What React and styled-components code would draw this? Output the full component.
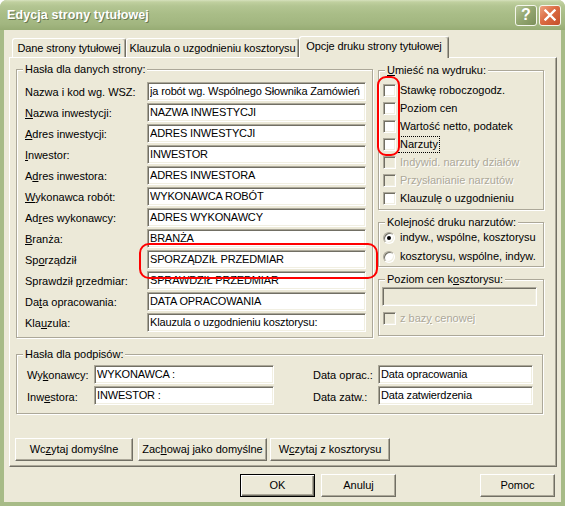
import React from 'react';
import styled, { createGlobalStyle, css } from 'styled-components';

const Global = createGlobalStyle`
  html, body { margin: 0; padding: 0; background: #ffffff; }
  body { font-family: "Liberation Sans", Arial, sans-serif; font-size: 11px; color: #000; }
  * { box-sizing: border-box; }
`;

const FACE = '#ECE9D8';
const SHADOW = '#ACA899';
const DARK = '#716F64';
const LIGHT = '#F1EFE2';

const sunken = css`
  border: 1px solid;
  border-color: ${SHADOW} #fff #fff ${SHADOW};
  box-shadow: inset 1px 1px 0 ${DARK}, inset -1px -1px 0 ${LIGHT};
`;

const Window = styled.div`
  position: relative;
  width: 565px;
  height: 506px;
  display: flex;
  flex-direction: column;
  background: #A7BB87;
  border-radius: 7px 7px 0 0;
  overflow: hidden;
`;

const TitleBar = styled.div`
  flex: none;
  height: 30px;
  display: flex;
  align-items: center;
  padding: 0 4px 0 7px;
  background: linear-gradient(to bottom, #D6E1BD 0px, #C0D09F 2px, #B3C592 6px, #A9BD87 14px, #A2B680 24px, #97AC74 30px);
`;

const Title = styled.div`
  flex: 1;
  color: #fff;
  font-family: "Liberation Sans", Arial, sans-serif;
  font-weight: bold;
  font-size: 12.5px;
  letter-spacing: 0.1px;
  text-shadow: 1px 1px 0 #6B7B52;
  padding-bottom: 1px;
`;

const CaptionButton = styled.div`
  width: 22px;
  height: 21px;
  margin-left: 2px;
  border: 1px solid #F4F6EC;
  border-radius: 3px;
  display: flex;
  align-items: center;
  justify-content: center;
  color: #fff;
  font-weight: bold;
  font-size: 16px;
  font-family: "Liberation Sans", Arial, sans-serif;
  background: ${(p) =>
    p.$close
      ? 'linear-gradient(135deg, #EEA27F 0%, #DB6B43 45%, #C5502A 100%)'
      : 'linear-gradient(135deg, #B9C79A 0%, #94A771 45%, #7C8F5A 100%)'};
`;

const Frame = styled.div`
  flex: 1;
  display: flex;
  flex-direction: column;
  background: ${FACE};
  margin: 0 4px 4px 4px;
  padding: 6px 2px 0 5px;
`;

const TabStrip = styled.div`
  display: flex;
  align-items: flex-end;
  height: 21px;
  padding-left: 3px;
  position: relative;
  z-index: 1;
`;

const Tab = styled.div`
  width: ${(p) => p.$w}px;
  height: ${(p) => (p.$active ? 22 : 19)}px;
  margin-bottom: ${(p) => (p.$active ? -1 : 0)}px;
  background: ${FACE};
  border-top: 1px solid #fff;
  border-left: 1px solid #fff;
  border-right: 1px solid ${DARK};
  border-radius: 3px 3px 0 0;
  box-shadow: inset -1px 0 0 ${SHADOW};
  display: flex;
  align-items: center;
  justify-content: center;
  padding-bottom: ${(p) => (p.$active ? 3 : 1)}px;
  white-space: nowrap;
  letter-spacing: -0.1px;
`;

const Panel = styled.div`
  width: 548px;
  height: 410px;
  border: 1px solid;
  border-color: #fff ${DARK} ${DARK} #fff;
  box-shadow: inset -1px -1px 0 ${SHADOW};
  padding: 11px 11px 0 6px;
  display: flex;
  flex-direction: column;
`;

const TopSection = styled.div`
  display: flex;
  gap: 5px;
`;

const Group = styled.div`
  position: relative;
  width: ${(p) => p.$w}px;
  height: ${(p) => p.$h}px;
  border: 1px solid ${SHADOW};
  box-shadow: inset 1px 1px 0 #fff, 1px 1px 0 #fff;
  padding: ${(p) => p.$pad};
  margin-top: ${(p) => p.$mt || 0}px;
  flex: none;
`;

const Legend = styled.span`
  position: absolute;
  top: -7px;
  left: 6px;
  padding: 0 2px;
  line-height: 13px;
  background: ${FACE};
  white-space: nowrap;
`;

const FieldGrid = styled.div`
  display: grid;
  grid-template-columns: ${(p) => p.$cols};
  grid-auto-rows: 19px;
  row-gap: 2px;
  align-items: center;
`;

const Label = styled.div`
  white-space: nowrap;
  padding-top: ${(p) => p.$dy || 0}px;
`;

const Key = styled.span`
  text-decoration: underline;
  text-underline-offset: 1px;
`;

const Field = styled.input`
  ${sunken};
  width: 100%;
  height: 19px;
  margin: 0;
  padding: 0 1px 1px 2px;
  font: inherit;
  letter-spacing: -0.15px;
  color: #000;
  background: ${(p) => (p.disabled ? FACE : '#fff')};
  outline: none;
  overflow: hidden;
  text-overflow: clip;
`;

const RightColumn = styled.div`
  display: flex;
  flex-direction: column;
  padding-top: 1px;
  gap: 12px;
`;

const CheckList = styled.div`
  display: flex;
  flex-direction: column;
  gap: 5px;
  margin-top: ${(p) => p.$mt || 0}px;
  padding-left: ${(p) => p.$pl || 0}px;
`;

const CheckRow = styled.div`
  display: flex;
  align-items: center;
  height: 13px;
  gap: 2px;
  white-space: nowrap;
  color: ${(p) => (p.$disabled ? SHADOW : '#000')};
  text-shadow: ${(p) => (p.$disabled ? '1px 1px 0 #fff' : 'none')};
`;

const Box = styled.span`
  ${sunken};
  width: 13px;
  height: 13px;
  flex: none;
  background: ${(p) => (p.$disabled ? FACE : '#fff')};
`;

const RadioDot = styled.span`
  ${sunken};
  width: 12px;
  height: 12px;
  flex: none;
  border-radius: 50%;
  background: #fff;
  display: flex;
  align-items: center;
  justify-content: center;
  margin-right: 1px;
  &::after {
    content: '';
    width: 4px;
    height: 4px;
    border-radius: 50%;
    background: ${(p) => (p.$checked ? '#000' : 'transparent')};
  }
`;

const CheckText = styled.span`
  border: 1px ${(p) => (p.$focus ? 'dotted #000' : 'solid transparent')};
  padding: 1px 1px;
  line-height: 13px;
`;

const RadioList = styled.div`
  display: flex;
  flex-direction: column;
  gap: 6px;
`;

const SignRow = styled.div`
  display: flex;
  justify-content: space-between;
`;

const ButtonRow = styled.div`
  display: flex;
  gap: 5px;
  margin: 24px 0 0 -1px;
`;

const Button = styled.div`
  width: ${(p) => p.$w}px;
  height: 23px;
  flex: none;
  display: flex;
  align-items: center;
  justify-content: center;
  background: ${FACE};
  white-space: nowrap;
  border: 1px solid;
  border-color: ${(p) => (p.$default ? '#000' : `#fff ${DARK} ${DARK} #fff`)};
  box-shadow: ${(p) =>
    p.$default
      ? `inset 1px 1px 0 #fff, inset -1px -1px 0 ${DARK}, inset -2px -2px 0 ${SHADOW}`
      : `inset -1px -1px 0 ${SHADOW}`};
  padding-bottom: 1px;
  margin-left: ${(p) => p.$ml || 0}px;
`;

const BottomBar = styled.div`
  display: flex;
  margin-top: 7px;
  padding-left: 231px;
  gap: 6px;
`;

const Highlight = styled.div`
  position: absolute;
  left: ${(p) => p.$x}px;
  top: ${(p) => p.$y}px;
  width: ${(p) => p.$w}px;
  height: ${(p) => p.$h}px;
  border: 2px solid #FF0000;
  border-radius: ${(p) => p.$r}px;
  pointer-events: none;
`;

function Acc({ text }) {
  const i = text.indexOf('&');
  if (i < 0) return text;
  return (
    <>
      {text.slice(0, i)}
      <Key>{text[i + 1]}</Key>
      {text.slice(i + 2)}
    </>
  );
}

const fields = [
  ['Nazwa i kod wg. WSZ:', 'ja robót wg. Wspólnego Słownika Zamówień'],
  ['&Nazwa inwestycji:', 'NAZWA INWESTYCJI'],
  ['&Adres inwestycji:', 'ADRES INWESTYCJI'],
  ['&Inwestor:', 'INWESTOR'],
  ['A&dres inwestora:', 'ADRES INWESTORA'],
  ['&Wykonawca robót:', 'WYKONAWCA ROBÓT'],
  ['Ad&res wykonawcy:', 'ADRES WYKONAWCY'],
  ['&Branża:', 'BRANŻA'],
  ['Sp&orządził', 'SPORZĄDZIŁ PRZEDMIAR'],
  ['Sprawdził &przedmiar:', 'SPRAWDZIŁ PRZEDMIAR'],
  ['Da&ta opracowania:', 'DATA OPRACOWANIA'],
  ['Kla&uzula:', 'Klauzula o uzgodnieniu kosztorysu:'],
];

const checks = [
  { t: 'Stawkę roboczogodz.' },
  { t: 'Poziom cen' },
  { t: 'Wartość netto, podatek' },
  { t: 'Narzuty', focus: true },
  { t: 'Indywid. narzuty działów', disabled: true },
  { t: 'Przysłanianie narzutów', disabled: true },
  { t: 'Klauzulę o uzgodnieniu' },
];

function Check({ t, focus, disabled }) {
  return (
    <CheckRow $disabled={disabled}>
      <Box $disabled={disabled} />
      <CheckText $focus={focus}>
        <Acc text={t} />
      </CheckText>
    </CheckRow>
  );
}

function Radio({ t, checked }) {
  return (
    <CheckRow>
      <RadioDot $checked={checked} />
      <CheckText>{t}</CheckText>
    </CheckRow>
  );
}

export default function App() {
  return (
    <>
      <Global />
      <Window>
        <TitleBar>
          <Title>Edycja strony tytułowej</Title>
          <CaptionButton>?</CaptionButton>
          <CaptionButton $close>
            <svg width="12" height="12" viewBox="0 0 12 12">
              <path d="M1.5 1.5 L10.5 10.5 M10.5 1.5 L1.5 10.5" stroke="#fff" strokeWidth="2.4" strokeLinecap="square" />
            </svg>
          </CaptionButton>
        </TitleBar>
        <Frame>
          <TabStrip>
            <Tab $w={114}>Dane strony tytułowej</Tab>
            <Tab $w={173}>Klauzula o uzgodnieniu kosztorysu</Tab>
            <Tab $w={150} $active>Opcje druku strony tytułowej</Tab>
          </TabStrip>
          <Panel>
            <TopSection>
              <Group $w={357} $h={269} $pad="12px 6px 0 8px">
                <Legend>Hasła dla danych strony:</Legend>
                <FieldGrid $cols="122px 219px">
                  {fields.map(([l, v]) => (
                    <React.Fragment key={l}>
                      <Label><Acc text={l} /></Label>
                      <Field readOnly value={v} />
                    </React.Fragment>
                  ))}
                </FieldGrid>
              </Group>
              <RightColumn>
                <Group $w={166} $h={140} $pad="13px 4px 0 4px">
                  <Legend><Acc text="&Umieść na wydruku:" /></Legend>
                  <CheckList>
                    {checks.map((c) => (
                      <Check key={c.t} {...c} />
                    ))}
                  </CheckList>
                </Group>
                <Group $w={166} $h={45} $pad="8px 4px 0 4px">
                  <Legend>Kolejność druku narzutów:</Legend>
                  <RadioList>
                    <Radio t="indyw., wspólne, kosztorysu" checked />
                    <Radio t="kosztorysu, wspólne, indyw." />
                  </RadioList>
                </Group>
                <Group $w={166} $h={57} $pad="7px 6px 0 3px">
                  <Legend><Acc text="Poziom cen k&osztorysu:" /></Legend>
                  <Field disabled readOnly value="" />
                  <CheckList $mt={6} $pl={1}>
                    <Check t="z baz&y cenowej" disabled />
                  </CheckList>
                </Group>
              </RightColumn>
            </TopSection>
            <Group $w={527} $h={60} $pad="10px 9px 0 10px" $mt={16}>
              <Legend>Hasła dla podpisów:</Legend>
              <SignRow>
                <FieldGrid $cols="67px 180px">
                  <Label><Acc text="Wy&konawcy:" /></Label>
                  <Field readOnly value="WYKONAWCA :" />
                  <Label $dy={2}><Acc text="Inw&estora:" /></Label>
                  <Field readOnly value="INWESTOR :" />
                </FieldGrid>
                <FieldGrid $cols="65px 155px">
                  <Label>Data oprac.:</Label>
                  <Field readOnly value="Data opracowania" />
                  <Label $dy={2}>Data zatw.:</Label>
                  <Field readOnly value="Data zatwierdzenia" />
                </FieldGrid>
              </SignRow>
            </Group>
            <ButtonRow>
              <Button $w={118}><Acc text="Wc&zytaj domyślne" /></Button>
              <Button $w={129}><Acc text="Zac&howaj jako domyślne" /></Button>
              <Button $w={120} $ml={-2}><Acc text="W&czytaj z kosztorysu" /></Button>
            </ButtonRow>
          </Panel>
          <BottomBar>
            <Button $w={75} $default>OK</Button>
            <Button $w={75}>Anuluj</Button>
            <Button $w={75} $ml={78}>Pomoc</Button>
          </BottomBar>
        </Frame>
        <Highlight $x={377} $y={76} $w={23} $h={80} $r={9} />
        <Highlight $x={139} $y={243} $w={239} $h={36} $r={10} />
      </Window>
    </>
  );
}
